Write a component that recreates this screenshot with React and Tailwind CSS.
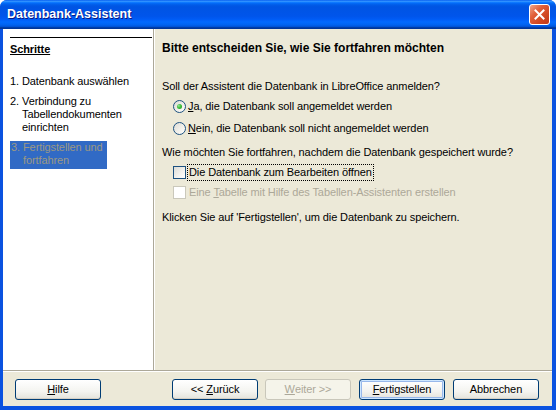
import React from "react";

// ── small XP-style controls ──────────────────────────────────────────────────
const Radio = ({ checked }) => (
  <span className="w-[13px] h-[13px] shrink-0 rounded-full border border-[#1c5180] bg-[linear-gradient(135deg,#dcdbd5_0%,#f2f1ec_60%,#ffffff_100%)] flex items-center justify-center">
    {checked && (
      <span className="w-[5px] h-[5px] rounded-full bg-[radial-gradient(circle_at_35%_35%,#9be59b_0%,#3cbf3c_45%,#1c9a1c_100%)]" />
    )}
  </span>
);

const Check = ({ disabled }) => (
  <span
    className={
      disabled
        ? "w-[13px] h-[13px] shrink-0 border border-[#cac8bb] bg-white"
        : "w-[13px] h-[13px] shrink-0 border border-[#1c5180] bg-[linear-gradient(135deg,#dcdcd7_0%,#f3f2ee_60%,#ffffff_100%)]"
    }
  />
);

const Btn = ({ children, variant, className = "" }) => {
  const base =
    "w-[86px] h-[21px] rounded-[3px] flex items-center justify-center text-[11px] leading-none ";
  if (variant === "disabled")
    return (
      <div
        className={
          base +
          "border border-[#c9c7ba] bg-[#f5f4ea] text-[#aca899] " +
          className
        }
      >
        {children}
      </div>
    );
  if (variant === "default")
    return (
      <div
        className={
          base +
          "border border-[#003c74] bg-[linear-gradient(to_bottom,#ffffff_0%,#f3f3ef_60%,#e3e2da_100%)] shadow-[inset_0_0_0_1px_#cee7ff,inset_0_0_0_2px_#98b8ea] text-black " +
          className
        }
      >
        {children}
      </div>
    );
  return (
    <div
      className={
        base +
        "border border-[#003c74] bg-[linear-gradient(to_bottom,#ffffff_0%,#f4f4f0_60%,#e4e3db_100%)] shadow-[inset_0_-1px_0_#d6d0c5] text-black " +
        className
      }
    >
      {children}
    </div>
  );
};

export default function App() {
  return (
    <div
      className="w-[556px] h-[410px] flex flex-col bg-[#0a52e0] rounded-t-[7px] overflow-hidden text-[11px] leading-[13px] tracking-[-0.1px] text-black"
      style={{ fontFamily: "'Liberation Sans', Arial, sans-serif" }}
    >
      {/* ── TITLE BAR ─────────────────────────────────────────────────────── */}
      <div className="h-[29px] shrink-0 flex items-center justify-between pl-[7px] pr-[6px] bg-[linear-gradient(to_bottom,#0058ee_0%,#3593ff_4%,#288eff_6%,#127dff_8%,#036ffc_10%,#0262ee_14%,#0057e5_20%,#0054e3_24%,#0055eb_56%,#005bf5_66%,#026afe_76%,#0062ef_86%,#0052d6_92%,#0040ab_94%,#003092_100%)]">
        <span className="text-white font-bold text-[12.5px] tracking-normal [text-shadow:1px_1px_0_#0a1883]">
          Datenbank-Assistent
        </span>
        <div className="w-[21px] h-[21px] rounded-[3px] border border-white bg-[linear-gradient(135deg,#f0a78c_0%,#e1603a_35%,#cf4620_70%,#c0391a_100%)] flex items-center justify-center">
          <svg width="11" height="11" viewBox="0 0 11 11">
            <path
              d="M1.5 1.5l8 8M9.5 1.5l-8 8"
              stroke="white"
              strokeWidth="2"
              strokeLinecap="square"
            />
          </svg>
        </div>
      </div>

      {/* ── BODY ──────────────────────────────────────────────────────────── */}
      <div className="flex-1 ml-[3px] mr-[4px] mb-[4px] flex flex-col bg-[#ece9d8]">
        <div className="h-[341px] flex">
          {/* steps */}
          <div className="w-[151px] bg-white border-r border-[#aca899] flex flex-col pl-[7px] pr-[1px]">
            <div className="mt-[8px] h-px bg-black" />
            <div className="mt-[5px] font-bold underline">Schritte</div>
            <div className="mt-[19px] flex whitespace-nowrap">
              <span className="w-[12px]">1.</span>
              <span>Datenbank auswählen</span>
            </div>
            <div className="mt-[7px] flex whitespace-nowrap">
              <span className="w-[12px]">2.</span>
              <span>
                Verbindung zu
                <br />
                Tabellendokumenten
                <br />
                einrichten
              </span>
            </div>
            <div className="mt-[7px] w-[97px] h-[28px] bg-[#316ac5] text-[#9c9884] flex whitespace-nowrap pl-[1px]">
              <span className="w-[12px]">3.</span>
              <span>
                Fertigstellen und
                <br />
                fortfahren
              </span>
            </div>
          </div>
          <div className="w-px bg-white" />

          {/* options */}
          <div className="flex-1 flex flex-col pl-[7px] pt-[13px]">
            <div className="font-bold text-[12px] tracking-normal">
              Bitte entscheiden Sie, wie Sie fortfahren möchten
            </div>
            <div className="mt-[25px]">
              Soll der Assistent die Datenbank in LibreOffice anmelden?
            </div>
            <div className="mt-[5px] h-[16px] flex items-center gap-[2px] pl-[11px]">
              <Radio checked />
              <span>
                <span className="underline">J</span>a, die Datenbank soll
                angemeldet werden
              </span>
            </div>
            <div className="mt-[6px] h-[16px] flex items-center gap-[2px] pl-[11px]">
              <Radio />
              <span>
                <span className="underline">N</span>ein, die Datenbank soll
                nicht angemeldet werden
              </span>
            </div>
            <div className="mt-[10px]">
              Wie möchten Sie fortfahren, nachdem die Datenbank gespeichert
              wurde?
            </div>
            <div className="mt-[5px] h-[16px] flex items-center gap-[1px] pl-[11px]">
              <Check />
              <span className="border border-dotted border-black px-px py-px">
                Die Datenbank zum Bearbeiten öffnen
              </span>
            </div>
            <div className="mt-[4px] h-[16px] flex items-center gap-[3px] pl-[11px] text-[#aca899]">
              <Check disabled />
              <span>
                Eine <span className="underline">T</span>abelle mit Hilfe des
                Tabellen-Assistenten erstellen
              </span>
            </div>
            <div className="mt-[11px]">
              Klicken Sie auf 'Fertigstellen', um die Datenbank zu speichern.
            </div>
          </div>
        </div>

        {/* separator */}
        <div className="h-[2px] border-t border-b border-t-[#aca899] border-b-white" />

        {/* ── BUTTONS ─────────────────────────────────────────────────────── */}
        <div className="flex-1 flex items-start justify-between pt-[7px] pl-[12px] pr-[13px]">
          <Btn>
            <span className="underline">H</span>ilfe
          </Btn>
          <div className="flex">
            <Btn>
              &lt;&lt; <span className="underline ml-[3px]">Z</span>urück
            </Btn>
            <Btn variant="disabled" className="ml-[7px]">
              <span className="underline">W</span>eiter &gt;&gt;
            </Btn>
            <Btn variant="default" className="ml-[8px]">
              <span className="underline">F</span>ertigstellen
            </Btn>
            <Btn className="ml-[8px]">Abbrechen</Btn>
          </div>
        </div>
      </div>
    </div>
  );
}
